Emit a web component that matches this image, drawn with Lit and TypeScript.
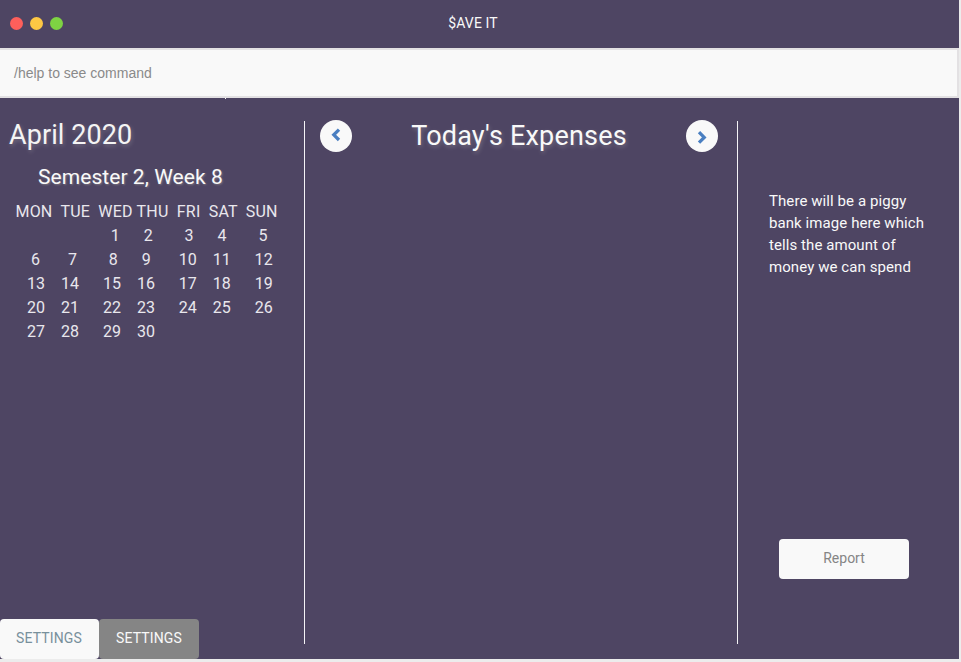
import { LitElement, html, css } from "lit";
import { customElement, property } from "lit/decorators.js";

// Day columns are padded with spaces, as in a console calendar.
const gap = (n: number) => " ".repeat(n);
const row = (...parts: (string | number)[]) =>
  parts.map((p) => (typeof p === "number" ? gap(p) : p)).join("");

const WEEKDAYS = row("MON", 2, "TUE", 2, "WED", 1, "THU", 2, "FRI", 2, "SAT", 2, "SUN");
const WEEKS = [
  row(24, "1", 6, "2", 8, "3", 6, "4", 8, "5"),
  row(4, "6", 7, "7", 8, "8", 6, "9", 7, "10", 4, "11", 6, "12"),
  row(3, "13", 4, "14", 6, "15", 4, "16", 6, "17", 4, "18", 6, "19"),
  row(3, "20", 4, "21", 6, "22", 4, "23", 6, "24", 4, "25", 6, "26"),
  row(3, "27", 4, "28", 6, "29", 4, "30"),
];

@customElement("month-calendar")
export class MonthCalendar extends LitElement {
  static styles = css`
    :host { display: block; color: #f9f9f9; }
    .month {
      margin: 0 0 0 9px; font-size: 27px; line-height: 34px; font-weight: 400; letter-spacing: 0.08px;
      color: #f4f4f4; text-shadow: 1px 2px 4px rgba(255, 255, 240, 0.22);
    }
    .week {
      margin: 10px 0 0 38px; font-size: 21px; line-height: 30px; letter-spacing: 0.06px;
      text-shadow: 1px 1px 2px rgba(255, 255, 220, 0.25);
    }
    .days { margin: 8px 0 0 15px; font-size: 16px; line-height: 24px; color: #e9e7ed; letter-spacing: 0.02px; }
    .line { white-space: pre; height: 24px; }
    .weekdays { letter-spacing: 0.19px; padding-left: 0.5px; }
  `;
  render() {
    return html`
      <h1 class="month">April 2020</h1>
      <div class="week">Semester 2, Week 8</div>
      <div class="days">
        <div class="line weekdays">${WEEKDAYS}</div>
        ${WEEKS.map((l) => html`<div class="line">${l}</div>`)}
      </div>
    `;
  }
}

@customElement("round-arrow")
export class RoundArrow extends LitElement {
  @property() direction = "left";
  static styles = css`
    :host { display: block; width: 32px; height: 32px; border-radius: 50%; background: #f9f9f9; }
    svg { display: block; }
    path { fill: none; stroke: #4a7fc1; stroke-width: 3.3; }
  `;
  render() {
    const d = this.direction === "left" ? "M19 9.6 L13.8 14.8 L19 20" : "M13 12.2 L18.2 17.4 L13 22.6";
    return html`<svg width="32" height="32" viewBox="0 0 32 32"><path d=${d}></path></svg>`;
  }
}

@customElement("app-root")
export class AppRoot extends LitElement {
  static styles = css`
    * { box-sizing: border-box; }
    :host {
      display: block; width: 961px; height: 662px; overflow: hidden;
      background: #ececec; font-family: Roboto, "Liberation Sans", sans-serif; color: #f9f9f9;
    }
    .window { width: 959px; height: 659px; background: #4e4563; display: flex; flex-direction: column; }
    .titlebar { height: 48px; display: grid; grid-template-columns: 120px 1fr 120px; align-items: center; padding-bottom: 2px; flex: none; }
    .lights { display: flex; gap: 7px; padding-left: 10px; }
    .light { width: 13px; height: 13px; border-radius: 50%; }
    .red { background: #fe5f5b; }
    .yellow { background: #fdc844; }
    .green { background: #7ed343; }
    .title { text-align: center; font-size: 14px; padding-right: 13px; letter-spacing: 0.12px; }
    .command {
      height: 50px; flex: none; border: 2px solid #e3e1e3; border-left: 0; background: #f9f9f9;
      padding-left: 14px; display: flex; align-items: center;
      font: 14px "Liberation Sans", sans-serif; color: #8a8a8a;
    }
    .tick { width: 1px; height: 1px; margin-left: 225px; background: #f9f9f9; flex: none; }
    .content { flex: 1; display: flex; min-height: 0; }
    .left { width: 304px; display: flex; flex-direction: column; justify-content: space-between; padding-top: 19px; }
    .tabs { display: flex; }
    .tab { height: 40px; border-radius: 4px; font-size: 14px; line-height: 38px; text-align: center; letter-spacing: 0.12px; }
    .tab.light-tab { width: 99px; background: #f9f9f9; color: #78909c; padding-right: 1px; }
    .tab.dark-tab { width: 100px; background: #858585; color: #f9f9f9; }
    .middle {
      width: 434px; margin: 22px 0 15px; border: 1px solid #f4f3f6; border-width: 0 1px;
    }
    .heading { display: flex; justify-content: space-between; padding: 0 19px 0 15px; margin-top: -1px; }
    .heading h2 {
      margin: 0; font-size: 27px; line-height: 32px; font-weight: 400; letter-spacing: 0.2px;
      text-shadow: 1px 2px 4px rgba(255, 255, 240, 0.22);
    }
    .right { width: 221px; padding: 91px 0 80px 31px; display: flex; flex-direction: column; justify-content: space-between; }
    .note { margin: 0; font-size: 15px; line-height: 22px; white-space: nowrap; letter-spacing: 0.08px; }
    .report {
      width: 130px; height: 40px; margin-left: 10px; border-radius: 4px; background: #f9f9f9;
      color: #858585; font-size: 14px; line-height: 39px; text-align: center;
    }
  `;
  render() {
    return html`
      <div class="window">
        <div class="titlebar">
          <div class="lights">
            <span class="light red"></span><span class="light yellow"></span><span class="light green"></span>
          </div>
          <div class="title">$AVE IT</div>
        </div>
        <div class="command">/help to see command</div>
        <div class="tick"></div>
        <div class="content">
          <div class="left">
            <month-calendar></month-calendar>
            <div class="tabs">
              <div class="tab light-tab">SETTINGS</div>
              <div class="tab dark-tab">SETTINGS</div>
            </div>
          </div>
          <div class="middle">
            <div class="heading">
              <round-arrow direction="left"></round-arrow>
              <h2>Today's Expenses</h2>
              <round-arrow direction="right"></round-arrow>
            </div>
          </div>
          <div class="right">
            <p class="note">There will be a piggy<br />bank image here which<br />tells the amount of<br />money we can spend</p>
            <div class="report">Report</div>
          </div>
        </div>
      </div>
    `;
  }
}
